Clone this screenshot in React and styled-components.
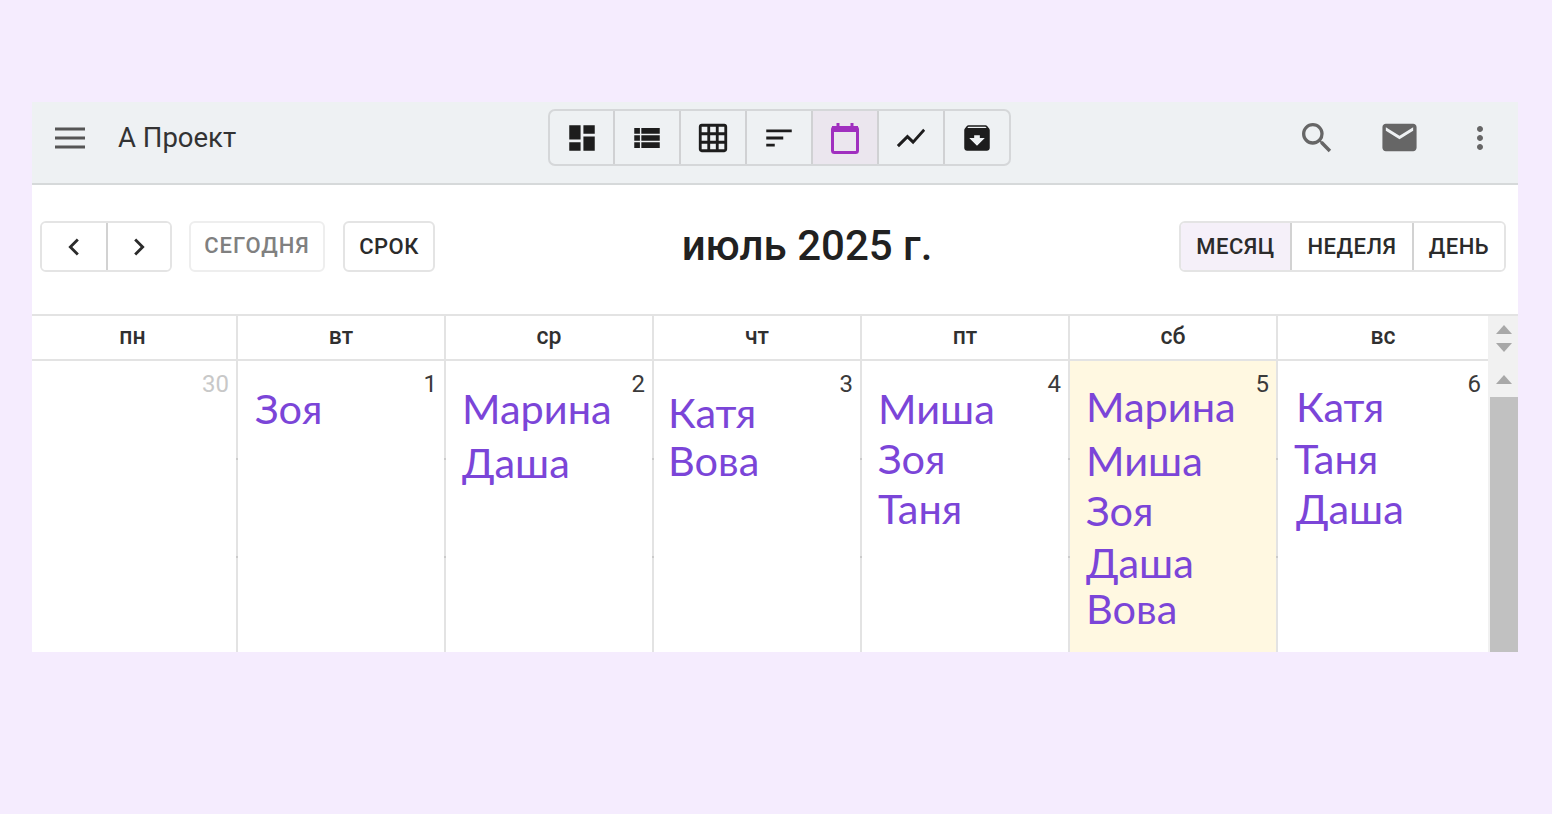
import React from "react";
import styled, { createGlobalStyle } from "styled-components";
import {
    MdDashboard,
    MdViewList,
    MdGridOn,
    MdSort,
    MdShowChart,
    MdArchive,
    MdSearch,
    MdMail,
    MdMoreVert,
    MdChevronLeft,
    MdChevronRight,
} from "react-icons/md";

const GlobalStyle = createGlobalStyle`
    html, body {
        margin: 0;
        background: #f5ecfe;
        font-family: Roboto, "Liberation Sans", sans-serif;
    }
`;

const Page = styled.div`
    width: 1552px;
    height: 814px;
    padding: 102px 34px 162px 32px;
    box-sizing: border-box;
    overflow: hidden;
`;

const Frame = styled.div`
    height: 550px;
    background: white;
    display: flex;
    flex-direction: column;
`;

const TopBar = styled.div`
    height: 83px;
    flex: none;
    box-sizing: border-box;
    display: flex;
    align-items: center;
    padding-bottom: 10px;
    background: #eef1f3;
    border-bottom: 2px solid #d6d9da;
`;

const BarLeft = styled.div`
    width: 516px;
    flex: none;
    display: flex;
    align-items: center;
    padding-left: 23px;
    box-sizing: border-box;
`;

const ProjectName = styled.span`
    margin-left: 32px;
    font-size: 27.5px;
    color: #333;
`;

const ViewSwitch = styled.div`
    display: flex;
    flex: none;
    height: 57px;
    box-sizing: border-box;
    border: 2px solid #d5d7d9;
    border-radius: 7px;
    overflow: hidden;
`;

const ViewButton = styled.div`
    display: flex;
    align-items: center;
    justify-content: center;
    box-sizing: border-box;
    color: ${(p) => (p.$active ? "#a02fbf" : "#1d1d1d")};
    background: ${(p) => (p.$active ? "#ebe6ee" : "transparent")};
    border-left: ${(p) => (p.$first ? "none" : "2px solid #d0d1d3")};
    width: ${(p) => (p.$first ? "63px" : "66px")};
`;

const BarRight = styled.div`
    flex: 1;
    display: flex;
    align-items: center;
    color: #666;
    padding-left: 266px;
`;

const BarIcon = styled.div`
    display: flex;
    align-items: center;
    justify-content: center;
    width: ${(p) => p.$w}px;
`;

const NavRow = styled.div`
    height: 129px;
    flex: none;
    box-sizing: border-box;
    display: flex;
    align-items: flex-start;
    padding: 36px 12px 0 8px;
`;

const ButtonGroup = styled.div`
    display: flex;
    height: 51px;
    box-sizing: border-box;
    border: 2px solid #e4e4e4;
    border-radius: 6px;
    overflow: hidden;
`;

const GroupButton = styled.div`
    width: ${(p) => p.$w}px;
    box-sizing: border-box;
    display: flex;
    align-items: center;
    justify-content: center;
    font-size: 22px;
    font-weight: 500;
    letter-spacing: 0.5px;
    color: #2b2b2b;
    background: ${(p) => (p.$active ? "#f5f0f9" : "white")};
    border-left: ${(p) => (p.$first ? "none" : "2px solid #d2d2d2")};
`;

const TextButton = styled.div`
    margin-left: ${(p) => p.$ml}px;
    width: ${(p) => p.$w}px;
    height: 51px;
    box-sizing: border-box;
    display: flex;
    align-items: center;
    justify-content: center;
    padding-bottom: ${(p) => (p.$muted ? "3px" : "0")};
    border: 2px solid ${(p) => (p.$muted ? "#eeeeee" : "#e4e4e4")};
    border-radius: 6px;
    font-size: 22px;
    font-weight: 500;
    letter-spacing: ${(p) => (p.$muted ? "1px" : "0.5px")};
    color: ${(p) => (p.$muted ? "#808080" : "#2b2b2b")};
`;

const Title = styled.h1`
    flex: 1;
    margin: 0;
    text-align: center;
    font-size: 42px;
    line-height: 49px;
    font-weight: 500;
    color: #212121;
`;

const WeekHead = styled.div`
    height: 47px;
    flex: none;
    box-sizing: border-box;
    display: grid;
    grid-template-columns: 204px repeat(5, 208px) 212px 30px;
    border-top: 2px solid #e3e3e3;
    border-bottom: 2px solid #e3e3e3;
`;

const DayName = styled.div`
    display: flex;
    align-items: center;
    justify-content: center;
    padding-right: ${(p) => (p.$first ? "3px" : "0")};
    padding-bottom: 2px;
    font-size: 23px;
    font-weight: 500;
    color: #303030;
    border-left: ${(p) => (p.$first ? "none" : "2px solid #e3e3e3")};
`;

const ScrollHead = styled.div`
    background: #f1f1f1;
    display: flex;
    flex-direction: column;
    align-items: center;
    justify-content: center;
    gap: 9px;
    margin-bottom: -2px;
    padding-left: 2px;
`;

const Arrow = styled.div`
    width: 0;
    height: 0;
    border-left: 8px solid transparent;
    border-right: 8px solid transparent;
    border-${(p) => (p.$down ? "top" : "bottom")}: 9px solid #a8a8a8;
`;

const WeekBody = styled.div`
    flex: 1;
    min-height: 0;
    display: grid;
    grid-template-columns: 204px repeat(5, 208px) 212px 30px;
`;

const DayCell = styled.div`
    position: relative;
    box-sizing: border-box;
    background-color: ${(p) => (p.$today ? "#fff8e1" : "white")};
    border-left: ${(p) => (p.$first ? "none" : "2px solid #e3e3e3")};

    &::before {
        content: ${(p) => (p.$first ? "none" : '""')};
        position: absolute;
        left: -2px;
        top: 97px;
        width: 2px;
        height: 2px;
        background: #cbcbcb;
        box-shadow: 0 98px 0 #cbcbcb;
    }
`;

const DateNum = styled.div`
    height: 22px;
    padding: 10px 7px 0 0;
    box-sizing: border-box;
    line-height: 26px;
    text-align: right;
    font-size: 24px;
    color: ${(p) => (p.$muted ? "#c8c8c8" : "#3a3a3a")};
`;

const Person = styled.div`
    font-family: Lato, "Open Sans", sans-serif;
    font-size: 41.5px;
    line-height: 46px;
    color: #7b45d8;
    margin-top: ${(p) => p.$top}px;
    margin-left: ${(p) => p.$left}px;
`;

const ScrollTrack = styled.div`
    background: #f1f1f1;
    display: flex;
    flex-direction: column;
    align-items: center;
`;

const TrackCap = styled.div`
    height: 36px;
    width: 100%;
    flex: none;
    display: flex;
    align-items: center;
    justify-content: center;
    padding-left: 2px;
    box-sizing: border-box;
`;

const Thumb = styled.div`
    flex: 1;
    align-self: flex-end;
    width: 28px;
    background: #c1c1c1;
`;

const MenuIcon = () => (
    <svg width="31" height="24" viewBox="0 0 31 24" fill="none" stroke="#555" strokeWidth="2.8">
        <path d="M0 3h30M0 12h30M0 21h30" />
    </svg>
);

const CalendarIcon = () => (
    <svg width="30" height="34" viewBox="0 0 30 34" fill="none">
        <path d="M2 5h26v6H2z" fill="currentColor" />
        <rect x="2.5" y="6.5" width="25" height="25" rx="2" stroke="currentColor" strokeWidth="3" />
        <path d="M8 2v6M22 2v6" stroke="currentColor" strokeWidth="3" />
    </svg>
);

const days = ["пн", "вт", "ср", "чт", "пт", "сб", "вс"];

const cells = [
    { num: "30", muted: true, people: [] },
    { num: "1", people: [{ name: "Зоя", left: 17, top: 2 }] },
    {
        num: "2",
        people: [
            { name: "Марина", left: 16, top: 2 },
            { name: "Даша", left: 16, top: 8 },
        ],
    },
    {
        num: "3",
        people: [
            { name: "Катя", left: 14, top: 6 },
            { name: "Вова", left: 14, top: 2 },
        ],
    },
    {
        num: "4",
        people: [
            { name: "Миша", left: 16, top: 2 },
            { name: "Зоя", left: 16, top: 4 },
            { name: "Таня", left: 16, top: 4 },
        ],
    },
    {
        num: "5",
        today: true,
        people: [
            { name: "Марина", left: 16, top: 0 },
            { name: "Миша", left: 16, top: 8 },
            { name: "Зоя", left: 16, top: 4 },
            { name: "Даша", left: 16, top: 6 },
            { name: "Вова", left: 16, top: 0 },
        ],
    },
    {
        num: "6",
        people: [
            { name: "Катя", left: 18, top: 0 },
            { name: "Таня", left: 16, top: 6 },
            { name: "Даша", left: 18, top: 4 },
        ],
    },
];

const App = () => {
    return (
        <Page>
            <GlobalStyle />
            <Frame>
                <TopBar>
                    <BarLeft>
                        <MenuIcon />
                        <ProjectName>А Проект</ProjectName>
                    </BarLeft>
                    <ViewSwitch>
                        <ViewButton $first><MdDashboard size={34} /></ViewButton>
                        <ViewButton><MdViewList size={34} /></ViewButton>
                        <ViewButton><MdGridOn size={34} /></ViewButton>
                        <ViewButton><MdSort size={34} /></ViewButton>
                        <ViewButton $active><CalendarIcon /></ViewButton>
                        <ViewButton><MdShowChart size={34} /></ViewButton>
                        <ViewButton><MdArchive size={34} /></ViewButton>
                    </ViewSwitch>
                    <BarRight>
                        <BarIcon $w={80}><MdSearch size={40} /></BarIcon>
                        <BarIcon $w={84}><MdMail size={41} /></BarIcon>
                        <BarIcon $w={77}><MdMoreVert size={36} /></BarIcon>
                    </BarRight>
                </TopBar>
                <NavRow>
                    <ButtonGroup>
                        <GroupButton $first $w={64}><MdChevronLeft size={34} /></GroupButton>
                        <GroupButton $w={64}><MdChevronRight size={34} /></GroupButton>
                    </ButtonGroup>
                    <TextButton $muted $ml={17} $w={136}>СЕГОДНЯ</TextButton>
                    <TextButton $ml={18} $w={92}>СРОК</TextButton>
                    <Title>июль 2025 г.</Title>
                    <ButtonGroup>
                        <GroupButton $first $active $w={109}>МЕСЯЦ</GroupButton>
                        <GroupButton $w={122}>НЕДЕЛЯ</GroupButton>
                        <GroupButton $w={92}>ДЕНЬ</GroupButton>
                    </ButtonGroup>
                </NavRow>
                <WeekHead>
                    {days.map((d, i) => (
                        <DayName key={d} $first={i === 0}>{d}</DayName>
                    ))}
                    <ScrollHead>
                        <Arrow />
                        <Arrow $down />
                    </ScrollHead>
                </WeekHead>
                <WeekBody>
                    {cells.map((c, i) => (
                        <DayCell key={c.num} $first={i === 0} $today={c.today}>
                            <DateNum $muted={c.muted}>{c.num}</DateNum>
                            {c.people.map((p, j) => (
                                <Person key={j} $left={p.left} $top={p.top}>{p.name}</Person>
                            ))}
                        </DayCell>
                    ))}
                    <ScrollTrack>
                        <TrackCap><Arrow /></TrackCap>
                        <Thumb />
                    </ScrollTrack>
                </WeekBody>
            </Frame>
        </Page>
    );
};

export default App;
